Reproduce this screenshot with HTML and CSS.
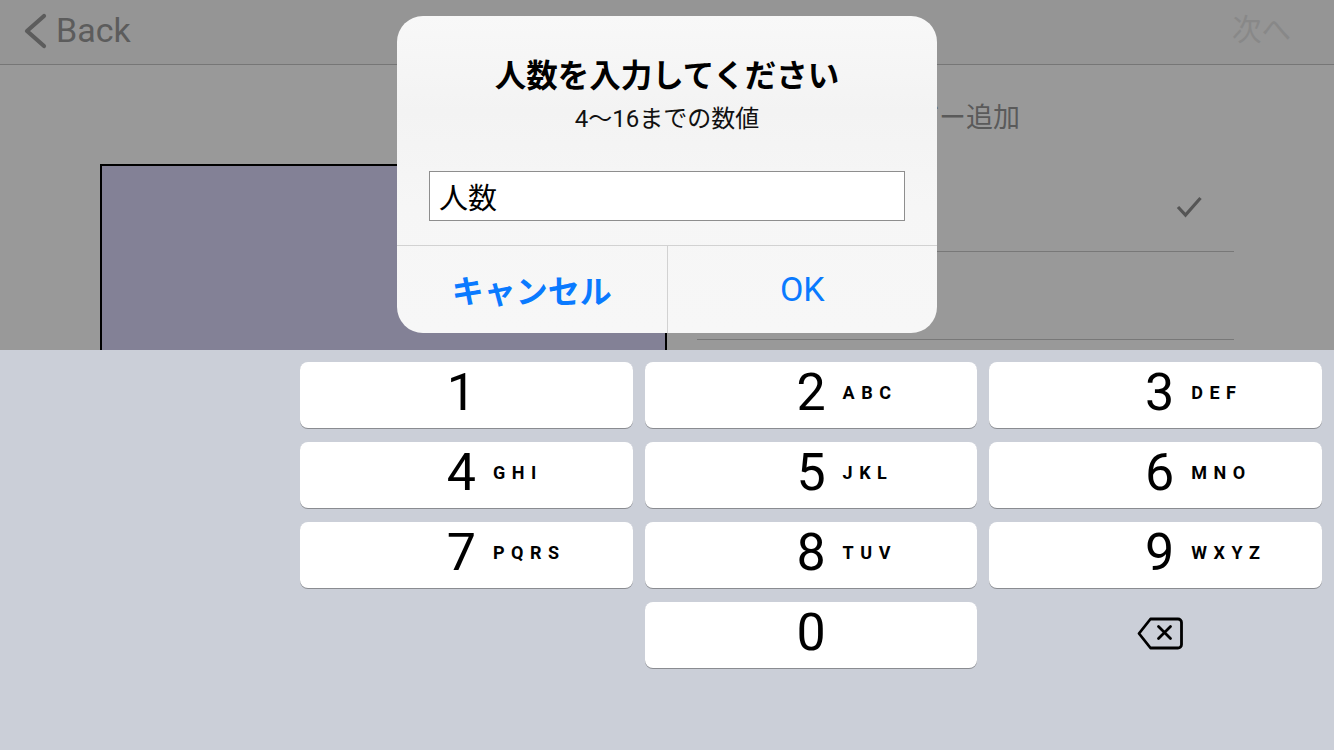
FILE: index.html
```html
<!DOCTYPE html>
<html lang="ja">
<head>
<meta charset="utf-8">
<title>人数入力</title>
<link rel="stylesheet" href="styles.css">
</head>
<body>
<div class="screen">
  <header class="nav">
    <div class="nav-back">
      <svg class="chevron" width="25" height="38" viewBox="0 0 25 38"><path d="M21 4 L4 19 L21 34" fill="none" stroke="#5c5c5c" stroke-width="4.2" stroke-linecap="round" stroke-linejoin="round"/></svg>
      <span>Back</span>
    </div>
    <div class="nav-title">メンバー設定</div>
    <div class="nav-next">次へ</div>
  </header>

  <main class="content">
    <div class="board"></div>
    <section class="list">
      <div class="list-head">メンバー追加</div>
      <div class="list-row">
        <svg width="26" height="22" viewBox="0 0 26 22"><path d="M2 11 L9.5 19 L24.5 2" fill="none" stroke="#555" stroke-width="3.2" stroke-linejoin="miter"/></svg>
      </div>
      <div class="list-row"></div>
    </section>
  </main>

  <div class="keyboard">
    <div class="key col-l"><span class="digit">1</span></div>
    <div class="key"><span class="digit">2</span><span class="letters">ABC</span></div>
    <div class="key col-r"><span class="digit">3</span><span class="letters">DEF</span></div>
    <div class="key col-l"><span class="digit">4</span><span class="letters">GHI</span></div>
    <div class="key"><span class="digit">5</span><span class="letters">JKL</span></div>
    <div class="key col-r"><span class="digit">6</span><span class="letters">MNO</span></div>
    <div class="key col-l"><span class="digit">7</span><span class="letters">PQRS</span></div>
    <div class="key"><span class="digit">8</span><span class="letters">TUV</span></div>
    <div class="key col-r"><span class="digit">9</span><span class="letters">WXYZ</span></div>
    <div class="blank"></div>
    <div class="key"><span class="digit">0</span></div>
    <div class="bksp">
      <svg width="47" height="33" viewBox="0 0 47 33"><path d="M2 16.5 L13.5 2 H41 A3.5 3.5 0 0 1 44.5 5.5 V27.5 A3.5 3.5 0 0 1 41 31 H13.5 Z" fill="none" stroke="#000" stroke-width="2.8" stroke-linejoin="round"/><path d="M21.5 9.5 L33.5 21.5 M33.5 9.5 L21.5 21.5" stroke="#000" stroke-width="2.8" stroke-linecap="round"/></svg>
    </div>
  </div>

  <div class="dialog">
    <div class="dialog-body">
      <div class="dialog-title">人数を入力してください</div>
      <div class="dialog-sub">4〜16までの数値</div>
      <input class="dialog-input" type="text" value="人数">
    </div>
    <div class="dialog-actions">
      <div class="btn btn-cancel">キャンセル</div>
      <div class="btn btn-ok">OK</div>
    </div>
  </div>
</div>
</body>
</html>
```

FILE: styles.css
```css
* { box-sizing: border-box; }

html, body {
  margin: 0;
  padding: 0;
}

body {
  width: 1334px;
  height: 750px;
  overflow: hidden;
  background: #999999;
  font-family: "Roboto", "Noto Sans CJK JP", sans-serif;
}

.screen {
  position: relative;
  width: 1334px;
  height: 750px;
  display: flex;
  flex-direction: column;
}

/* nav bar */
.nav {
  height: 65px;
  flex: none;
  background: #959595;
  border-bottom: 1px solid #767676;
  display: grid;
  grid-template-columns: 1fr auto 1fr;
  align-items: center;
  padding-bottom: 5px;
}

.nav-back {
  display: flex;
  align-items: center;
  padding-left: 23px;
  gap: 8px;
  color: #5c5c5c;
  font-size: 34px;
  line-height: 40px;
}

.chevron { flex: none; margin-top: 3px; }

.nav-title {
  font-size: 33px;
  font-weight: 700;
  color: #2a2a2a;
  line-height: 40px;
  padding-right: 20px;
  padding-top: 9px;
}

.nav-next {
  justify-self: end;
  padding-right: 43px;
  font-size: 29.5px;
  line-height: 36px;
  color: #888888;
}

/* content */
.content {
  height: 285px;
  flex: none;
  display: flex;
  background: #999999;
}

.board {
  flex: none;
  width: 567px;
  margin-left: 100px;
  margin-top: 99px;
  background: #838196;
  border: 2px solid #000;
  border-bottom: 0;
}

.list {
  flex: none;
  width: 537px;
  margin-left: 30px;
}

.list-head {
  height: 98px;
  padding-top: 38px;
  padding-left: 161px;
  font-size: 27px;
  line-height: 30px;
  color: #5a5a5a;
  white-space: nowrap;
}

.list-row {
  height: 89px;
  border-bottom: 1px solid #787878;
  display: flex;
  align-items: center;
  justify-content: flex-end;
  padding-right: 32px;
}

.list-row + .list-row { height: 88px; }

/* keyboard */
.keyboard {
  flex: 1;
  background: #cbcfd8;
  padding: 12px 12px 0 300px;
  display: grid;
  grid-template-columns: repeat(3, 1fr);
  grid-auto-rows: 66px;
  gap: 14px 12px;
}

.key {
  background: #ffffff;
  border-radius: 8px;
  box-shadow: 0 1px 0 #8a8c91;
  display: grid;
  grid-template-columns: 1fr auto 1fr;
  align-items: center;
  padding-bottom: 5px;
}

.key.col-l { padding-right: 10px; }
.key.col-r { padding-left: 8px; }

.digit {
  grid-column: 2;
  font-size: 52px;
  font-weight: 400;
  line-height: 1;
  color: #000;
}

.letters {
  grid-column: 3;
  justify-self: start;
  padding-left: 17px;
  font-size: 18px;
  font-weight: 700;
  letter-spacing: 6.5px;
  color: #000;
}

.bksp {
  display: flex;
  align-items: center;
  justify-content: center;
  padding-left: 9px;
  padding-bottom: 4px;
}

/* dialog */
.dialog {
  position: absolute;
  left: 397px;
  top: 16px;
  width: 540px;
  height: 317px;
  border-radius: 26px;
  overflow: hidden;
  background: linear-gradient(180deg, #f8f8f8 0%, #f3f3f3 30%, #f6f6f6 60%, #f7f7f7 100%);
  display: flex;
  flex-direction: column;
}

.dialog-body {
  padding: 43px 32px 24px;
  display: flex;
  flex-direction: column;
  align-items: center;
}

.dialog-title {
  font-size: 31.5px;
  font-weight: 700;
  line-height: 36px;
  color: #000;
}

.dialog-sub {
  margin-top: 9px;
  font-size: 24px;
  line-height: 30px;
  color: #111;
}

.dialog-input {
  margin-top: 37px;
  width: 476px;
  height: 50px;
  border: 1px solid #8e8e8e;
  background: #fff;
  padding: 0 9px;
  font-family: "Noto Sans CJK JP", sans-serif;
  font-size: 29px;
  color: #000;
  outline: none;
}

.dialog-actions {
  flex: 1;
  display: flex;
  border-top: 1px solid #d2d2d2;
}

.btn {
  flex: 1;
  display: flex;
  align-items: center;
  justify-content: center;
  color: #0a7aff;
  padding-bottom: 2px;
}

.btn-cancel {
  font-size: 32px;
  font-weight: 700;
}

.btn-ok {
  border-left: 1px solid #d2d2d2;
  font-size: 34px;
  font-weight: 400;
}
```
